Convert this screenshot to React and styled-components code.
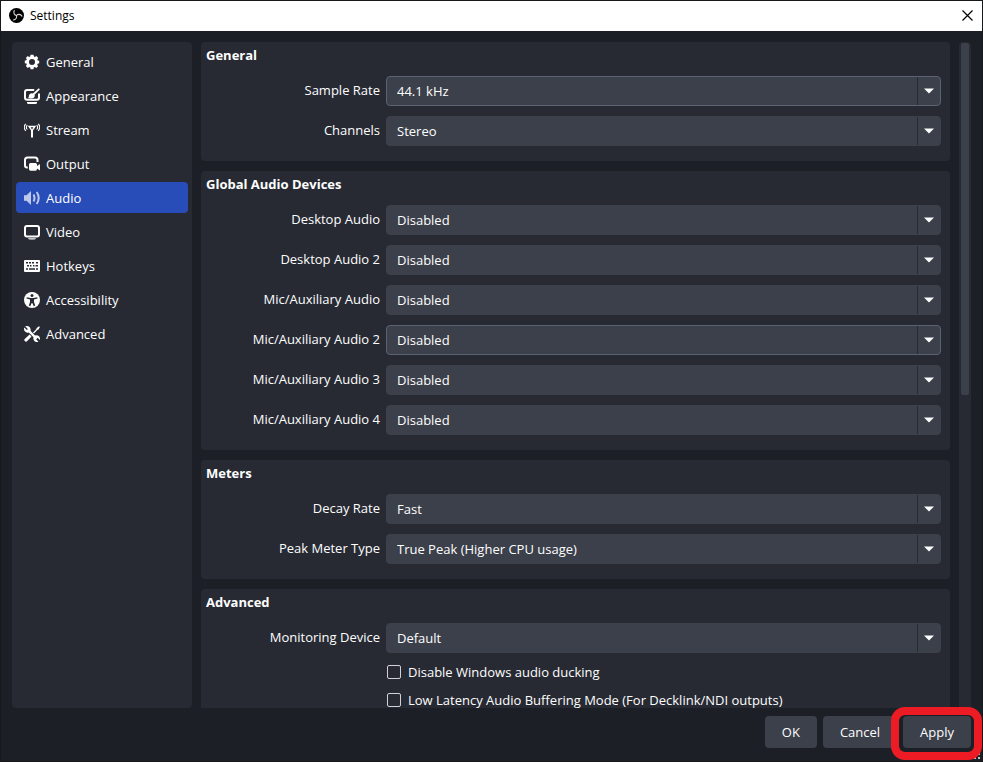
import React, { useState } from "react";
import styled, { createGlobalStyle } from "styled-components";

const color = {
  window: "#1d1f26",
  panel: "#272a33",
  field: "#3c404b",
  outline: "#5b6273",
  accent: "#284cb8",
  text: "#fefefe",
  marker: "#ed1c24",
};

const GlobalStyle = createGlobalStyle`
  *, *::before, *::after { box-sizing: border-box; }
  body { margin: 0; background: ${color.window}; }
  button, select, input { font: inherit; color: inherit; }
`;

const Window = styled.div`
  position: relative;
  display: flex;
  flex-direction: column;
  height: 100vh;
  overflow: hidden;
  border: 1px solid #17181c;
  background: ${color.window};
  color: ${color.text};
  font: 13px/18px "Open Sans", "Noto Sans", sans-serif;
`;

const TitleBar = styled.header`
  display: flex;
  flex: none;
  align-items: center;
  gap: 6px;
  height: 30px;
  padding: 0 7px 1px 8px;
  background: #fff;
  color: #000;
`;

const WindowTitle = styled.h1`
  flex: 1;
  margin: 0;
  font: 12px/16px "Open Sans", "Noto Sans", sans-serif;
`;

const CloseButton = styled.button`
  display: flex;
  padding: 2px;
  border: 0;
  background: none;
`;

const Body = styled.div`
  display: flex;
  flex: 1;
  min-height: 0;
  gap: 9px;
  padding: 11px 11px 0;
`;

const Sidebar = styled.nav`
  display: flex;
  flex: none;
  flex-direction: column;
  gap: 3px;
  width: 180px;
  padding: 4px;
  border-radius: 4px;
  background: ${color.panel};
`;

const NavItem = styled.button`
  display: flex;
  align-items: center;
  gap: 6px;
  height: 31px;
  padding: 0 8px;
  border: 0;
  border-radius: 4px;
  background: ${(p) => (p.$active ? color.accent : "transparent")};
  text-align: left;

  svg {
    flex: none;
    opacity: ${(p) => (p.$active ? 0.7 : 1)};
  }
`;

const Content = styled.main`
  display: flex;
  flex: 1;
  flex-direction: column;
  gap: 10px;
  min-width: 0;
  overflow-y: auto;
  scrollbar-width: none;
`;

const Panel = styled.section`
  flex: none;
  padding: 4px 9px 15px 5px;
  border-radius: 4px;
  background: ${color.panel};
`;

const PanelTitle = styled.h2`
  margin: 0 0 12px;
  font-size: 13px;
  font-weight: 700;
  line-height: 18px;
`;

const Rows = styled.div`
  display: flex;
  flex-direction: column;
  gap: 10px;
`;

const Row = styled.div`
  display: grid;
  grid-template-columns: 174px 1fr;
  gap: 6px;
`;

const RowLabel = styled.label`
  padding-top: 5px;
  text-align: right;
`;

const SelectBox = styled.div`
  display: grid;
  grid-template-columns: 1fr 23px;
  height: 30px;
  border: 1px solid ${(p) => (p.$outlined ? color.outline : color.field)};
  border-radius: 4px;
  background: ${color.field};
`;

const Select = styled.select`
  grid-area: 1 / 1 / 2 / 3;
  width: 100%;
  padding: 0 32px 0 10px;
  border: 0;
  outline: 0;
  appearance: none;
  background: transparent;

  option { background: ${color.field}; }
`;

const Arrow = styled.span`
  display: flex;
  grid-area: 1 / 2 / 2 / 3;
  align-items: center;
  justify-content: center;
  border-left: 1px solid ${color.panel};
  pointer-events: none;
`;

const CheckList = styled.div`
  display: flex;
  flex-direction: column;
  gap: 10px;
  padding-left: 181px;
`;

const CheckLabel = styled.label`
  display: flex;
  align-items: center;
  gap: 7px;
`;

const CheckBox = styled.input`
  width: 14px;
  height: 14px;
  margin: 0;
  border: 1px solid #d0d2d8;
  border-radius: 2px;
  appearance: none;

  &:checked { background: ${color.accent}; }
`;

const ScrollTrack = styled.div`
  flex: none;
  width: 12px;
  padding: 1px 2px;
  border-radius: 4px 4px 0 0;
  background: ${color.panel};
`;

const ScrollThumb = styled.div`
  height: 53%;
  border-radius: 2px;
  background: ${color.field};
`;

const Footer = styled.footer`
  display: flex;
  flex: none;
  justify-content: flex-end;
  gap: 6px;
  padding: 8px 11px 13px;
`;

const Button = styled.button`
  height: 32px;
  padding: 0 17px;
  border: 0;
  border-radius: 4px;
  background: ${color.field};
`;

const Marked = styled.div`
  position: relative;
  z-index: 1;

  &::after {
    content: "";
    position: absolute;
    inset: -9px -11px -12px -12px;
    border: 8px solid ${color.marker};
    border-radius: 14px;
    pointer-events: none;
  }
`;

const ResizeGrip = styled.svg`
  position: absolute;
  right: 2px;
  bottom: 2px;
`;

const shape = { fill: "currentColor" };
const line = { fill: "none", stroke: "currentColor", strokeWidth: 2 };

const icons = {
  gear: (
    <path
      {...shape}
      fillRule="evenodd"
      d="M6.500.8h3l.4 1.800 1 .4 1.500-1L14.200 4l-.9 1.500.4 1 1.500.3v2.500l-1.600.4-.4 1 .9 1.500-1.800 1.800-1.500-.9-1 .4-.4 1.700H6.600l-.4-1.700-1-.4-1.500.9-1.800-1.900.9-1.500-.4-1L.8 9.200V6.600l1.600-.3.4-1L1.900 4l1.800-1.900 1.500.9 1-.4zM8 5a3 3 0 1 0 0 6 3 3 0 0 0 0-6z"
    />
  ),
  appearance: (
    <>
      <path {...line} d="M10.200 2H3.200Q1 2 1 4.200v5.400q0 2.200 2.200 2.200h9.600q2.200 0 2.200-2.200V5.600" />
      <path {...shape} d="M4 10c1-.3.700-1.300 1-2.700a3 3 0 0 1 5.800.2c.1 2.100-1.500 3-3.500 3-1.400 0-2.700-.2-3.300-.5z" />
      <path {...line} strokeWidth="1.800" d="M8.800 7 15.300.8" />
      <path {...shape} d="M3 14h10v.500Q13 16 11.500 16h-7Q3 16 3 14.500z" />
    </>
  ),
  stream: (
    <>
      <path {...shape} fillRule="evenodd" d="M3.800 3.800h8.400L9 8.600V15.500H7V8.600zM6.600 5.200 8 7.400l1.400-2.200z" />
      <path {...line} strokeWidth="1.100" d="M3.300 3.200a3.200 3.200 0 0 0 0 4.300M12.700 3.200a3.200 3.200 0 0 1 0 4.300M1.700 1.800a5.600 5.600 0 0 0 0 7.100M14.300 1.800a5.600 5.600 0 0 1 0 7.100" />
    </>
  ),
  output: (
    <>
      <path {...line} d="M3.800 11.500H3q-2 0-2-2V4q0-2.500 2.500-2.500h7.500q2.500 0 2.500 2.500v2" />
      <path {...shape} d="M6.500 7h5Q13 7 13 8.500V10l3-2v6.500l-3-2v.5q0 1.800-1.500 1.800h-5Q5 14.800 5 13V8.500Q5 7 6.500 7z" />
    </>
  ),
  audio: (
    <>
      <path {...shape} d="M0 5.200h2.500L7 1v14l-4.500-4.200H0z" />
      <path {...line} d="M9.500 4.600q2 3.400 0 6.800M12.700 2q4 6 0 12" />
    </>
  ),
  video: (
    <>
      <rect {...line} x="1" y="2" width="14" height="10.500" rx="2" />
      <path {...shape} d="M4 14.200h8q-.5 1.300-2 1.300H6q-1.500 0-2-1.300z" />
    </>
  ),
  hotkeys: (
    <path
      {...shape}
      fillRule="evenodd"
      d="M1 2h14q1 0 1 1v10q0 1-1 1H1q-1 0-1-1V3q0-1 1-1zM2 4v1.500h2V4zM5 4v1.500h2V4zM8 4v1.500h2V4zM12 4v1.500h2V4zM3 7v1.500h2V7zM6 7v1.500h1.500V7zM9 7v1.500h1.500V7zM11.500 7v1.500H14V7zM2 10.300v1.500h2v-1.500zM5 10.300v1.500h6v-1.500zM12 10.300v1.500h2v-1.500z"
    />
  ),
  accessibility: (
    <>
      <circle {...shape} cx="8" cy="8" r="8" />
      <circle cx="8" cy="3.500" r="1.500" fill={color.panel} />
      <path fill={color.panel} d="M2.800 5.200 6.500 6h3l3.700-.8.300 1.200L10 7.500V10l1.200 3.600-1.400.6L8.300 11h-.6l-1.500 3.200-1.400-.6L6 10V7.500L2.500 6.400z" />
    </>
  ),
  advanced: (
    <>
      <path {...shape} d="M1.500.3 4 2.900 2.900 4 .3 1.500C-.7 3.900.8 6.600 3.400 6.700c.6 0 1-.1 1.400-.2l4.700 4.700c-.6 2.200.6 4.600 3.100 4.900.7 0 1.300-.1 1.800-.4l-2.200-2.400 1.500-1.500 2.100 2.300c.9-2.600-.9-4.900-3.300-4.900-.5 0-1 .1-1.400.200L6.500 4.800C7 2-1.500-4.500 1.500.3z" />
      <path {...shape} d="M3.200.2C5.700 0 7 2.300 6.500 4.800L4.300 4.500 4 2.900 1.500.3zM15 .2 15.900 1.100 14.500 3.500l-1.200.6L10 7.500l-1-1 3.200-3.300.5-1.300zM5.600 8.600l1.900 1.900-4.500 4.800q-1.100.9-2.200-.2-1-1.100-.1-2.200z" />
    </>
  ),
};

const Icon = ({ name }) => (
  <svg width="16" height="16" viewBox="0 0 16 16" aria-hidden="true">
    {icons[name]}
  </svg>
);

const Logo = () => (
  <svg width="15" height="15" viewBox="0 0 30 30" aria-hidden="true">
    <circle cx="15" cy="15" r="15" fill="#000" />
    <g fill="none" stroke="#d8d8d8" strokeWidth="2.200" strokeLinecap="round">
      <path id="blade" d="M15 15c-4.500-1-6.500-5.500-4.500-10" />
      <path d="M15 15c-4.500-1-6.500-5.500-4.500-10" transform="rotate(120 15 15)" />
      <path d="M15 15c-4.500-1-6.500-5.500-4.500-10" transform="rotate(240 15 15)" />
    </g>
  </svg>
);

const sections = [
  ["General", "gear"],
  ["Appearance", "appearance"],
  ["Stream", "stream"],
  ["Output", "output"],
  ["Audio", "audio"],
  ["Video", "video"],
  ["Hotkeys", "hotkeys"],
  ["Accessibility", "accessibility"],
  ["Advanced", "advanced"],
];

const panels = [
  {
    title: "General",
    rows: [
      { label: "Sample Rate", value: "44.1 kHz", outlined: true },
      { label: "Channels", value: "Stereo" },
    ],
  },
  {
    title: "Global Audio Devices",
    rows: [
      { label: "Desktop Audio", value: "Disabled" },
      { label: "Desktop Audio 2", value: "Disabled" },
      { label: "Mic/Auxiliary Audio", value: "Disabled" },
      { label: "Mic/Auxiliary Audio 2", value: "Disabled", outlined: true },
      { label: "Mic/Auxiliary Audio 3", value: "Disabled" },
      { label: "Mic/Auxiliary Audio 4", value: "Disabled" },
    ],
  },
  {
    title: "Meters",
    rows: [
      { label: "Decay Rate", value: "Fast" },
      { label: "Peak Meter Type", value: "True Peak (Higher CPU usage)" },
    ],
  },
  {
    title: "Advanced",
    rows: [{ label: "Monitoring Device", value: "Default" }],
    checks: [
      "Disable Windows audio ducking",
      "Low Latency Audio Buffering Mode (For Decklink/NDI outputs)",
    ],
  },
];

function SelectRow({ label, value, outlined }) {
  const id = label.toLowerCase().replace(/[^a-z0-9]+/g, "-");
  return (
    <Row>
      <RowLabel htmlFor={id}>{label}</RowLabel>
      <SelectBox $outlined={outlined}>
        <Select id={id} defaultValue={value}>
          <option>{value}</option>
        </Select>
        <Arrow>
          <svg width="10" height="6" viewBox="0 0 10 6" aria-hidden="true">
            <path d="M0 .5h10L5 5.500z" fill="currentColor" />
          </svg>
        </Arrow>
      </SelectBox>
    </Row>
  );
}

export default function App() {
  const [active, setActive] = useState("Audio");
  return (
    <Window>
      <GlobalStyle />
      <TitleBar>
        <Logo />
        <WindowTitle>Settings</WindowTitle>
        <CloseButton aria-label="Close">
          <svg width="11" height="11" viewBox="0 0 11 11" aria-hidden="true">
            <path d="M.5.5l10 10M10.500.5l-10 10" stroke="#000" strokeWidth="1.200" />
          </svg>
        </CloseButton>
      </TitleBar>
      <Body>
        <Sidebar aria-label="Settings sections">
          {sections.map(([name, icon]) => (
            <NavItem key={name} $active={name === active} onClick={() => setActive(name)}>
              <Icon name={icon} />
              {name}
            </NavItem>
          ))}
        </Sidebar>
        <Content>
          {panels.map((panel) => (
            <Panel key={panel.title}>
              <PanelTitle>{panel.title}</PanelTitle>
              <Rows>
                {panel.rows.map((row) => (
                  <SelectRow key={row.label} {...row} />
                ))}
                {panel.checks && (
                  <CheckList>
                    {panel.checks.map((text) => (
                      <CheckLabel key={text}>
                        <CheckBox type="checkbox" />
                        {text}
                      </CheckLabel>
                    ))}
                  </CheckList>
                )}
              </Rows>
            </Panel>
          ))}
        </Content>
        <ScrollTrack>
          <ScrollThumb />
        </ScrollTrack>
      </Body>
      <Footer>
        <Button>OK</Button>
        <Button>Cancel</Button>
        <Marked>
          <Button>Apply</Button>
        </Marked>
      </Footer>
      <ResizeGrip width="10" height="10" viewBox="0 0 10 10" aria-hidden="true">
        <path d="M0 8h2v2H0zM4 8h2v2H4zM8 8h2v2H8zM4 4h2v2H4zM8 4h2v2H8zM8 0h2v2H8z" fill="#c4c4c4" />
      </ResizeGrip>
    </Window>
  );
}
